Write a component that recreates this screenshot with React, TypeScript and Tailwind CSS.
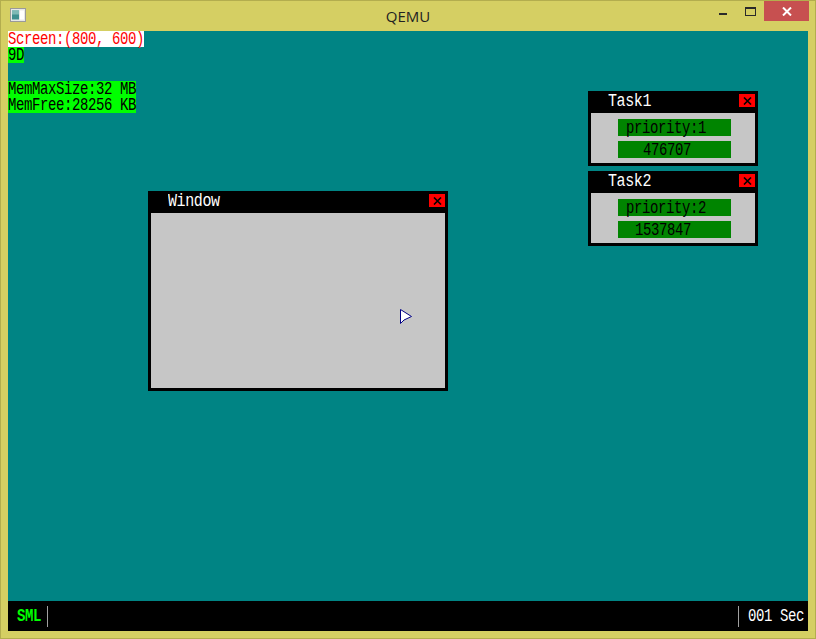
import React from "react";

const mono = { fontFamily: '"Liberation Mono", "DejaVu Sans Mono", monospace' };

function Txt({ children, className = "" }: { children: React.ReactNode; className?: string }) {
  return (
    <span className={"inline-block origin-center scale-y-[1.25] text-[14px] leading-[12px] tracking-[-0.4px] whitespace-pre " + className}>
      {children}
    </span>
  );
}

function CloseBox() {
  return (
    <div className="flex h-[13px] w-[16px] items-center justify-center bg-[#ff0000]">
      <svg width="9" height="8" viewBox="0 0 9 8">
        <path d="M1 0.5 L8 7.5 M8 0.5 L1 7.5" stroke="#000" strokeWidth="1.6" />
      </svg>
    </div>
  );
}

function TaskWin({ title, prio, count, countPad, top }: { title: string; prio: string; count: string; countPad: string; top: string }) {
  return (
    <div className={"absolute left-[580px] flex h-[75px] w-[170px] flex-col bg-black px-[3px] pb-[3px] " + top}>
      <div className="flex h-[22px] items-start justify-between pt-[3px]">
        <div className="flex h-4 items-center pl-[17px] text-white" style={mono}>
          <Txt className="text-[15px]">{title}</Txt>
        </div>
        <CloseBox />
      </div>
      <div className="flex flex-1 flex-col gap-[5px] bg-[#c6c6c6] pl-[27px] pt-[6px]">
        <div className="flex h-[17px] w-[113px] items-center bg-[#008400] pl-2 text-black" style={mono}>
          <Txt>{prio}</Txt>
        </div>
        <div className={"flex h-[17px] w-[113px] items-center bg-[#008400] text-black " + countPad} style={mono}>
          <Txt>{count}</Txt>
        </div>
      </div>
    </div>
  );
}

export default function App() {
  return (
    <div className="flex h-[639px] w-[816px] flex-col overflow-hidden border border-[#b3ad4e] bg-[#d5cf63]">
      {/* title bar */}
      <div className="relative flex h-[30px] items-start">
        <div className="ml-[9px] mt-[7px]">
          <svg width="16" height="14" viewBox="0 0 16 14">
            <rect x="0.5" y="0.5" width="15" height="13" fill="#e8e8e8" stroke="#9a9a9a" />
            <rect x="2" y="2.5" width="7" height="9" fill="#3f8f8f" />
            <rect x="2" y="2.5" width="7" height="4" fill="#7fb9b5" />
            <rect x="10" y="2.5" width="4" height="9" fill="#ffffff" />
          </svg>
        </div>
        <div className="absolute left-0 right-0 top-[5px] text-center text-[15px] leading-5 text-[#222]" style={{ fontFamily: '"Open Sans", "Noto Sans", sans-serif' }}>
          QEMU
        </div>
        <div className="ml-auto flex items-start">
          <div className="mr-[18px] mt-[12px] h-[2px] w-[8px] bg-[#2a2a2a]" />
          <div className="mr-[8px] mt-[6px] h-[9px] w-[11px] border border-t-2 border-[#2a2a2a]" />
          <div className="flex h-[20px] w-[45px] items-center justify-center bg-[#c75050]">
            <svg width="10" height="9" viewBox="0 0 10 9">
              <path d="M1 0.5 L9 8.5 M9 0.5 L1 8.5" stroke="#fff" strokeWidth="2" />
            </svg>
          </div>
          <div className="w-[6px]" />
        </div>
      </div>

      {/* screen */}
      <div className="mx-[7px] flex h-[600px] w-[800px] flex-col bg-[#008484]">
        <div className="relative flex-1" style={mono}>
          <div className="flex flex-col items-start">
            <div className="flex h-4 items-center bg-white text-[#ff0000]">
              <Txt>Screen:(800, 600)</Txt>
            </div>
            <div className="flex h-4 items-center bg-[#00ff00] text-black">
              <Txt>9D</Txt>
            </div>
            <div className="mt-[18px] flex h-4 items-center bg-[#00ff00] text-black">
              <Txt>MemMaxSize:32 MB</Txt>
            </div>
            <div className="flex h-4 items-center bg-[#00ff00] text-black">
              <Txt>MemFree:28256 KB</Txt>
            </div>
          </div>

          <TaskWin title="Task1" prio="priority:1" count="476707" countPad="pl-[25px]" top="top-[60px]" />
          <TaskWin title="Task2" prio="priority:2" count="1537847" countPad="pl-[17px]" top="top-[140px]" />

          {/* Window */}
          <div className="absolute left-[140px] top-[160px] flex h-[200px] w-[300px] flex-col bg-black px-[3px] pb-[3px]">
            <div className="flex h-[22px] items-start justify-between pt-[3px]">
              <div className="flex h-4 items-center pl-[17px] text-white">
                <Txt className="text-[15px]">Window</Txt>
              </div>
              <CloseBox />
            </div>
            <div className="flex-1 bg-[#c6c6c6]" />
          </div>

          {/* cursor */}
          <svg className="absolute left-[391px] top-[277px]" width="14" height="17" viewBox="0 0 14 17">
            <path d="M1.5 1.5 L1.5 15.5 L5 12 L12.5 8.5 Z" fill="#fff" stroke="#000084" strokeWidth="1" strokeLinejoin="miter" />
          </svg>
        </div>

        {/* taskbar */}
        <div className="flex h-[30px] items-center bg-black" style={mono}>
          <div className="flex h-4 items-center pl-[9px] pr-[6px] text-[#00ff00]">
            <Txt className="font-bold">SML</Txt>
          </div>
          <div className="h-[21px] w-px bg-[#a0a0a0]" />
          <div className="flex-1" />
          <div className="h-[21px] w-px bg-[#a0a0a0]" />
          <div className="flex h-4 items-center pl-[9px] pr-[4px] text-white">
            <Txt>001 Sec</Txt>
          </div>
        </div>
      </div>
    </div>
  );
}
